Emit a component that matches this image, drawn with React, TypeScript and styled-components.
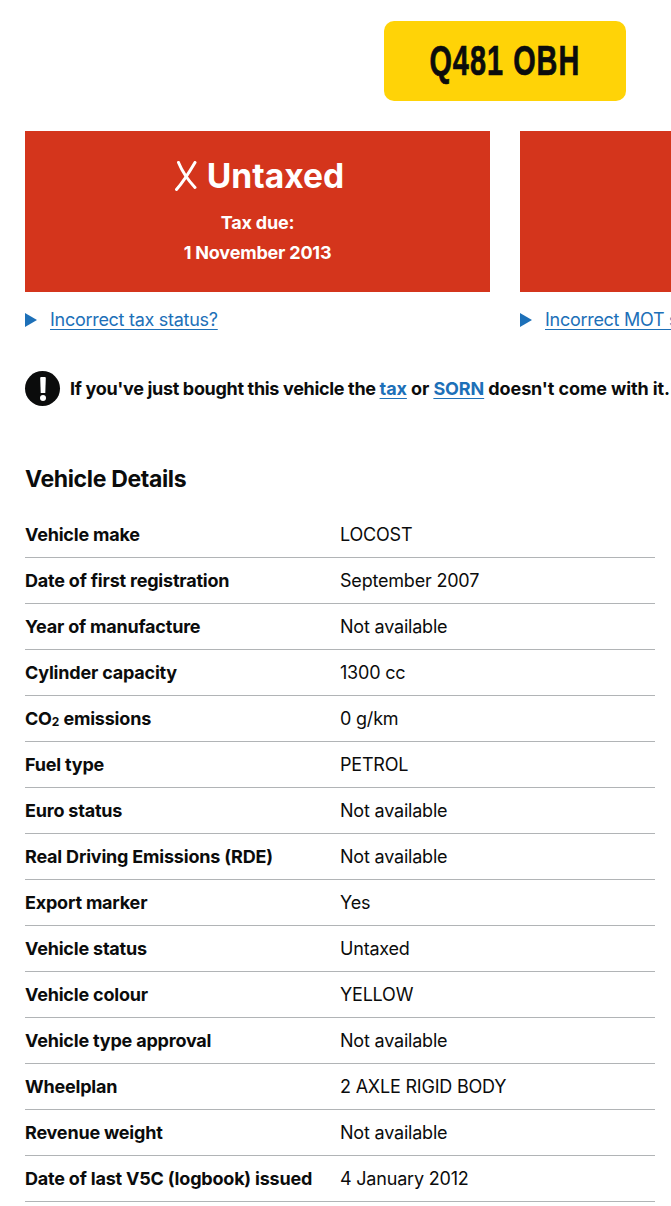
import React from "react";
import styled, { createGlobalStyle } from "styled-components";

interface DetailRow {
  label: React.ReactNode;
  value: string;
}

interface StatusCard {
  title?: string;
  dueLabel?: string;
  dueDate?: string;
  linkText: string;
}

const Sub = styled.span`
  font-size: 12px;
  vertical-align: -1px;
  letter-spacing: 0;
`;

const details: DetailRow[] = [
  { label: "Vehicle make", value: "LOCOST" },
  { label: "Date of first registration", value: "September 2007" },
  { label: "Year of manufacture", value: "Not available" },
  { label: "Cylinder capacity", value: "1300 cc" },
  { label: <>CO<Sub>2</Sub> emissions</>, value: "0 g/km" },
  { label: "Fuel type", value: "PETROL" },
  { label: "Euro status", value: "Not available" },
  { label: "Real Driving Emissions (RDE)", value: "Not available" },
  { label: "Export marker", value: "Yes" },
  { label: "Vehicle status", value: "Untaxed" },
  { label: "Vehicle colour", value: "YELLOW" },
  { label: "Vehicle type approval", value: "Not available" },
  { label: "Wheelplan", value: "2 AXLE RIGID BODY" },
  { label: "Revenue weight", value: "Not available" },
  { label: "Date of last V5C (logbook) issued", value: "4 January 2012" },
];

// the second card's heading sits past the edge of the window
const cards: StatusCard[] = [
  { title: "Untaxed", dueLabel: "Tax due:", dueDate: "1 November 2013", linkText: "Incorrect tax status?" },
  { linkText: "Incorrect MOT status?" },
];

const GlobalStyle = createGlobalStyle`
  html, body {
    margin: 0;
    padding: 0;
    background: #fff;
    overflow: hidden;
  }
  body {
    font-family: Inter, "Noto Sans", "Liberation Sans", sans-serif;
    color: #0b0c0c;
  }
`;

const Page = styled.main`
  width: 630px;
  padding: 21px 0 0 25px;
`;

const PlateRow = styled.div`
  display: flex;
  justify-content: flex-end;
  padding-right: 29px;
`;

const Plate = styled.div`
  width: 242px;
  height: 80px;
  display: flex;
  align-items: center;
  justify-content: center;
  background: #ffd307;
  border-radius: 10px;
`;

const PlateText = styled.span`
  color: #0b0c0c;
  font-family: "Liberation Sans", sans-serif;
  font-size: 42px;
  font-weight: 700;
  letter-spacing: 1.5px;
  white-space: nowrap;
  -webkit-text-stroke: 0.7px #0b0c0c;
  transform: scaleX(0.687);
`;

const Cards = styled.div`
  display: flex;
  gap: 30px;
  margin-top: 30px;
`;

const CardColumn = styled.section`
  width: 465px;
  flex-shrink: 0;
`;

const Card = styled.div`
  height: 161px;
  display: flex;
  flex-direction: column;
  align-items: center;
  background: #d4351c;
  color: #fff;
  padding-top: 24px;
  box-sizing: border-box;
`;

const CardTitle = styled.div`
  display: flex;
  align-items: center;
  gap: 10px;
  padding-left: 4px;
  font-size: 33.6px;
  line-height: 42px;
  font-weight: 700;
`;

const CardText = styled.div`
  font-size: 18px;
  line-height: 30px;
  font-weight: 700;
  letter-spacing: -0.2px;
`;

const CardDue = styled.div`
  margin-top: 11px;
  text-align: center;
`;

const Summary = styled.div`
  display: flex;
  align-items: center;
  gap: 13px;
  margin-top: 15px;
  height: 25px;
  font-size: 18px;
  letter-spacing: -0.28px;
  white-space: nowrap;
`;

const Arrow = styled.span`
  width: 0;
  height: 0;
  border-style: solid;
  border-width: 7px 0 7px 12px;
  border-color: transparent transparent transparent #1d70b8;
`;

const Link = styled.a<{ $bold?: boolean }>`
  color: #1d70b8;
  text-decoration: underline;
  text-underline-offset: 3px;
  font-weight: ${(props) => (props.$bold ? 700 : 400)};
  cursor: pointer;
`;

const Notice = styled.div`
  display: flex;
  align-items: center;
  gap: 10px;
  margin-top: 39px;
  font-size: 18px;
  font-weight: 700;
  letter-spacing: -0.1px;
  white-space: nowrap;
`;

const NoticeLead = styled.span`
  letter-spacing: -0.33px;
`;

const NoticeIcon = styled.span`
  width: 35px;
  height: 35px;
  flex-shrink: 0;
  display: flex;
  align-items: center;
  justify-content: center;
  border-radius: 50%;
  background: #0b0c0c;
`;

const Heading = styled.h2`
  margin: 58px 0 0;
  font-size: 23px;
  line-height: 30px;
  font-weight: 700;
  letter-spacing: -0.35px;
`;

const DetailList = styled.dl`
  margin: 18px 0 0;
`;

const Row = styled.div`
  display: grid;
  grid-template-columns: 315px 1fr;
  height: 46px;
  box-sizing: border-box;
  align-items: center;
  border-bottom: 1px solid #b1b4b6;
  font-size: 18px;
`;

const Label = styled.dt`
  font-weight: 700;
  letter-spacing: -0.2px;
  white-space: nowrap;
`;

const Value = styled.dd`
  margin: 0;
  letter-spacing: -0.2px;
`;

const CrossIcon = () => (
  <svg width="22" height="30" viewBox="0 0 22 30" fill="none" stroke="#fff" strokeWidth="3" strokeLinecap="round">
    <path d="M3.5 1.5 C7 10 13 19 20 26.5" />
    <path d="M20 1.5 C15 10 9 20 1.5 28.5" />
  </svg>
);

const ExclamationIcon = () => (
  <svg width="6" height="24" viewBox="0 0 6 24" fill="#fff">
    <path d="M0.2 1 a1 1 0 0 1 1 -1 h3.6 a1 1 0 0 1 1 1 l-0.5 15 h-4.6 z" />
    <circle cx="3" cy="21" r="3" />
  </svg>
);

const App: React.FC = () => {
  return (
    <Page>
      <GlobalStyle />
      <PlateRow>
        <Plate>
          <PlateText>Q481 OBH</PlateText>
        </Plate>
      </PlateRow>
      <Cards>
        {cards.map((card) => (
          <CardColumn key={card.linkText}>
            <Card>
              {card.title && (
                <>
                  <CardTitle>
                    <CrossIcon />
                    {card.title}
                  </CardTitle>
                  <CardDue>
                    <CardText>{card.dueLabel}</CardText>
                    <CardText>{card.dueDate}</CardText>
                  </CardDue>
                </>
              )}
            </Card>
            <Summary>
              <Arrow />
              <Link>{card.linkText}</Link>
            </Summary>
          </CardColumn>
        ))}
      </Cards>
      <Notice>
        <NoticeIcon>
          <ExclamationIcon />
        </NoticeIcon>
        <span>
          <NoticeLead>If you've just bought this vehicle the </NoticeLead>
          <Link $bold>tax</Link> or <Link $bold>SORN</Link> doesn't come with it.
        </span>
      </Notice>
      <Heading>Vehicle Details</Heading>
      <DetailList>
        {details.map((row, index) => (
          <Row key={index}>
            <Label>{row.label}</Label>
            <Value>{row.value}</Value>
          </Row>
        ))}
      </DetailList>
    </Page>
  );
};

export default App;
